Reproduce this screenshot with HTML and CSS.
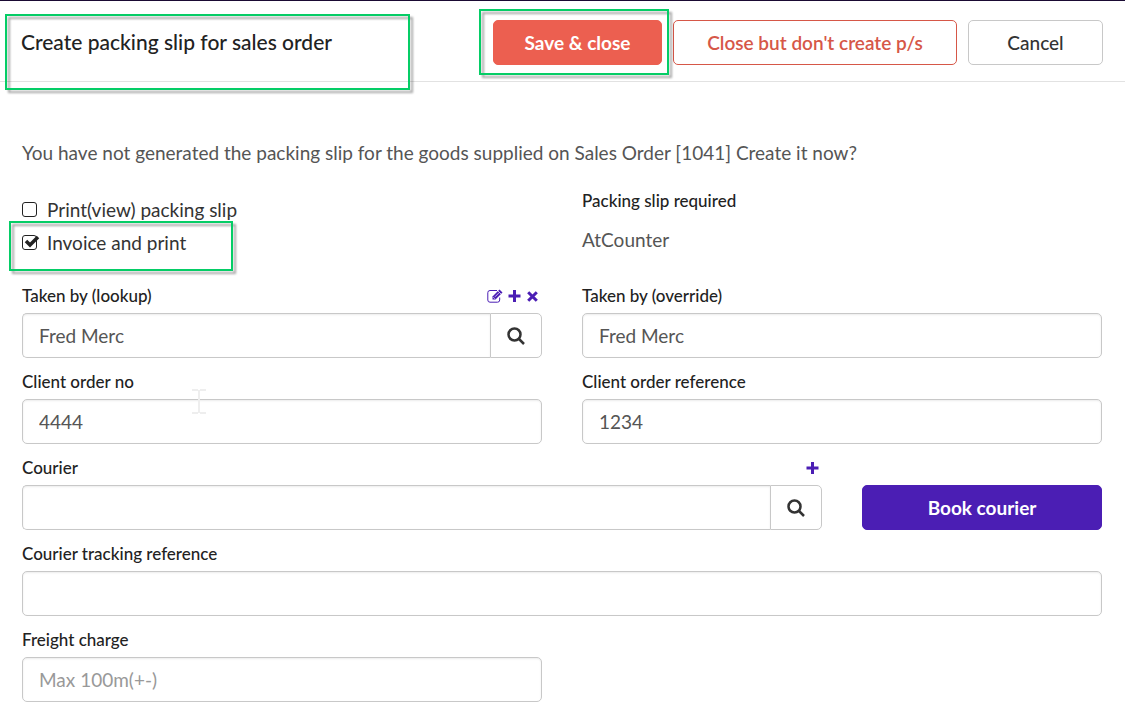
FILE: index.html
```html
<!DOCTYPE html>
<html lang="en">
<head>
    <meta charset="UTF-8">
    <meta name="viewport" content="width=device-width, initial-scale=1.0">
    <title>Create packing slip for sales order</title>
    <link rel="stylesheet" href="styles.css">
</head>
<body>
    <header class="dialog-header">
        <div class="title">
            <h1>Create packing slip for sales order</h1>
            <span class="highlight highlight-title"></span>
        </div>
        <div class="actions">
            <div class="save-wrap">
                <button type="submit" form="slipForm" class="btn btn-save">Save &amp; close</button>
                <span class="highlight highlight-save"></span>
            </div>
            <button type="button" class="btn btn-outline">Close but don't create p/s</button>
            <button type="button" class="btn btn-cancel">Cancel</button>
        </div>
    </header>

    <main>
        <p class="message">You have not generated the packing slip for the goods supplied on Sales Order [1041] Create it now?</p>

        <form id="slipForm">
            <div class="row options">
                <div class="checks">
                    <div class="check">
                        <span class="check-box">
                            <input type="checkbox" id="printSlip">
                            <svg class="tick" viewBox="0 0 18 16"><path d="M4 6l4 4 8-8"/></svg>
                        </span>
                        <label for="printSlip">Print(view) packing slip</label>
                    </div>
                    <div class="check">
                        <span class="check-box">
                            <input type="checkbox" id="invoicePrint" checked>
                            <svg class="tick" viewBox="0 0 18 16"><path d="M4 6l4 4 8-8"/></svg>
                        </span>
                        <label for="invoicePrint">Invoice and print</label>
                        <span class="highlight highlight-check"></span>
                    </div>
                </div>
                <div class="required">
                    <h2>Packing slip required</h2>
                    <p>AtCounter</p>
                </div>
            </div>

            <div class="row">
                <div class="field">
                    <div class="field-head">
                        <label for="takenBy">Taken by (lookup)</label>
                        <div class="tools">
                            <button type="button" aria-label="Edit">
                                <svg width="16" height="14" viewBox="0 0 16 14">
                                    <path class="line" d="M10 1.500H3Q.8 1.500.8 3.700V11Q.8 13.200 3 13.200H10.500Q12.700 13.200 12.700 11V8.500"/>
                                    <path class="solid" d="M5.500 7.500L12.500.5l3 3-7 7h-3z"/>
                                    <path class="cut" d="M8 7.800l4.200-4.200M6.300 8.200l1.600 1.600M11 2l3 3"/>
                                </svg>
                            </button>
                            <button type="button" aria-label="Add">
                                <svg width="13" height="14" viewBox="0 0 13 14"><path class="bold" d="M6.500 1v12M.5 7h12"/></svg>
                            </button>
                            <button type="button" aria-label="Clear">
                                <svg width="13" height="14" viewBox="0 0 13 14"><path class="bold" d="M2.200 3.200l8.600 8.600M10.800 3.200l-8.600 8.600"/></svg>
                            </button>
                        </div>
                    </div>
                    <div class="lookup">
                        <input type="text" id="takenBy" value="Fred Merc">
                        <button type="button" aria-label="Search">
                            <svg width="18" height="18" viewBox="0 0 18 18"><circle cx="7.500" cy="7.500" r="6"/><path d="M12 12l5 5"/></svg>
                        </button>
                    </div>
                </div>
                <div class="field">
                    <div class="field-head"><label for="takenByOverride">Taken by (override)</label></div>
                    <input type="text" id="takenByOverride" value="Fred Merc">
                </div>
            </div>

            <div class="row">
                <div class="field">
                    <div class="field-head"><label for="orderNo">Client order no</label></div>
                    <input type="text" id="orderNo" value="4444">
                    <svg class="pointer" width="14" height="25" viewBox="0 0 14 25"><path d="M0 1h6M8 1h6M0 24h6M8 24h6M7 1v23"/></svg>
                </div>
                <div class="field">
                    <div class="field-head"><label for="orderRef">Client order reference</label></div>
                    <input type="text" id="orderRef" value="1234">
                </div>
            </div>

            <div class="row row-courier">
                <div class="field">
                    <div class="field-head">
                        <label for="courier">Courier</label>
                        <div class="tools">
                            <button type="button" aria-label="Add courier">
                                <svg width="13" height="14" viewBox="0 0 13 14"><path class="bold" d="M6.500 1v12M.5 7h12"/></svg>
                            </button>
                        </div>
                    </div>
                    <div class="lookup">
                        <input type="text" id="courier">
                        <button type="button" aria-label="Search couriers">
                            <svg width="18" height="18" viewBox="0 0 18 18"><circle cx="7.500" cy="7.500" r="6"/><path d="M12 12l5 5"/></svg>
                        </button>
                    </div>
                </div>
                <button type="button" class="btn btn-book">Book courier</button>
            </div>

            <div class="field">
                <div class="field-head"><label for="tracking">Courier tracking reference</label></div>
                <input type="text" id="tracking">
            </div>

            <div class="row">
                <div class="field">
                    <div class="field-head"><label for="freight">Freight charge</label></div>
                    <input type="text" id="freight" placeholder="Max 100m(+-)">
                </div>
            </div>
        </form>
    </main>
</body>
</html>
```
FILE: styles.css
```css
:root {
    --purple: #4b1eb4;
    --red: #ec5f50;
    --red-dark: #d65748;
    --green: #05cd66;
    --border-color: #c8c8c8;
    --text-color: #555;
    --dark: #222;
}

* {
    box-sizing: border-box;
    margin: 0;
    padding: 0;
}

body {
    background: #fff;
    border-top: 1px solid #1a0a33;
    color: var(--text-color);
    font-family: Lato, "Open Sans", sans-serif;
    font-size: 19px;
    line-height: 24px;
}

button,
input {
    font: inherit;
}

button {
    cursor: pointer;
}

/* header */
.dialog-header {
    display: flex;
    justify-content: space-between;
    align-items: flex-start;
    height: 81px;
    padding: 19px 22px 0 21px;
    border-bottom: 1px solid #e2e2e2;
}

.title,
.save-wrap,
.check,
.check-box,
.field {
    position: relative;
}

h1 {
    color: var(--dark);
    font-size: 21px;
    font-weight: 500;
    line-height: 44px;
}

.actions {
    display: flex;
    gap: 11px;
}

.btn {
    height: 45px;
    border: 1px solid;
    border-radius: 5px;
    background: #fff;
    font-weight: 500;
}

.btn-save {
    width: 169px;
    background: var(--red);
    border-color: var(--red);
    color: #fff;
    font-weight: 700;
}

.btn-outline {
    width: 284px;
    border-color: var(--red-dark);
    color: var(--red-dark);
    font-weight: 600;
}

.btn-cancel {
    width: 135px;
    border-color: var(--border-color);
    color: #333;
}

.btn-book {
    background: var(--purple);
    border-color: var(--purple);
    color: #fff;
    font-weight: 700;
}

/* green call-out frames */
.highlight {
    position: absolute;
    border: 2px solid var(--green);
    filter: drop-shadow(3px 3px 1px rgba(0, 0, 0, 0.35));
    pointer-events: none;
}

.highlight-title {
    top: -6px;
    left: -16px;
    width: 405px;
    height: 76px;
}

.highlight-save {
    top: -11px;
    left: -14px;
    width: 190px;
    height: 66px;
}

.highlight-check {
    top: -5px;
    left: -13px;
    width: 224px;
    height: 50px;
}

/* form */
main {
    padding: 59px 23px 15px 22px;
}

form {
    display: flex;
    flex-direction: column;
    gap: 12px;
}

.row {
    display: grid;
    grid-template-columns: 1fr 1fr;
    gap: 40px;
}

.row-courier {
    grid-template-columns: 1fr 240px;
    align-items: end;
}

.options {
    height: 83px;
}

.message {
    margin-bottom: 24px;
}

.checks {
    padding-top: 4px;
}

.check {
    display: flex;
    align-items: center;
    gap: 10px;
    height: 33px;
    color: #333;
}

.check-box {
    width: 15px;
    height: 15px;
}

.check-box input {
    display: block;
    appearance: none;
    width: 15px;
    height: 15px;
    border: 1px solid #222;
    border-radius: 3px;
}

.tick {
    display: none;
    position: absolute;
    top: 0;
    left: 0;
    width: 18px;
    height: 16px;
    fill: none;
    stroke: #222;
    stroke-width: 3.5;
    pointer-events: none;
}

input:checked + .tick {
    display: block;
}

.required h2,
.field label {
    color: var(--dark);
    font-size: 17px;
    font-weight: 500;
    line-height: 24px;
}

.required p {
    margin-top: 15px;
}

.field-head {
    display: flex;
    justify-content: space-between;
    align-items: center;
    height: 24px;
    margin-bottom: 5px;
}

.tools {
    display: flex;
    gap: 5px;
    padding-right: 3px;
}

.tools button {
    display: flex;
    border: none;
    background: none;
}

.tools path {
    fill: none;
    stroke: var(--purple);
}

.tools .bold {
    stroke-width: 3;
}

.tools .solid {
    fill: var(--purple);
    stroke: none;
}

.tools .cut {
    stroke: #fff;
    stroke-width: 0.7;
}

input[type="text"] {
    display: block;
    width: 100%;
    height: 45px;
    padding: 0 16px;
    border: 1px solid var(--border-color);
    border-radius: 5px;
    background: #fff;
    box-shadow: inset 0 1px 2px rgba(0, 0, 0, 0.08);
    color: var(--text-color);
}

input::placeholder {
    color: #999;
}

.lookup {
    display: flex;
}

.lookup input[type="text"] {
    flex: 1;
    min-width: 0;
    border-right: none;
    border-radius: 5px 0 0 5px;
}

.lookup button {
    display: flex;
    align-items: center;
    justify-content: center;
    width: 52px;
    border: 1px solid var(--border-color);
    border-radius: 0 5px 5px 0;
    background: #fff;
}

.lookup svg {
    fill: none;
    stroke: #333;
    stroke-width: 2.5;
}

.pointer {
    position: absolute;
    top: 19px;
    left: 170px;
    fill: none;
    stroke: #eee;
    stroke-width: 2;
    pointer-events: none;
}
```
